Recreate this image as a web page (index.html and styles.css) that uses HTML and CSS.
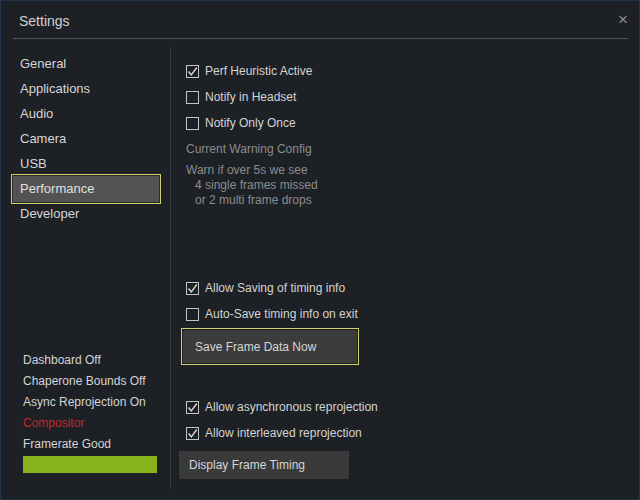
FILE: index.html
```html
<!DOCTYPE html>
<html>
<head>
<meta charset="utf-8">
<link rel="stylesheet" href="styles.css">
</head>
<body>
<div class="window">
  <div class="titlebar">
    <span class="title">Settings</span>
    <span class="close">×</span>
  </div>
  <div class="content">
    <div class="sidebar">
      <div class="nav">
        <div class="nav-item">General</div>
        <div class="nav-item">Applications</div>
        <div class="nav-item">Audio</div>
        <div class="nav-item">Camera</div>
        <div class="nav-item">USB</div>
        <div class="nav-item selected">Performance</div>
        <div class="nav-item">Developer</div>
      </div>
      <div class="status">
        <div class="status-line">Dashboard Off</div>
        <div class="status-line">Chaperone Bounds Off</div>
        <div class="status-line">Async Reprojection On</div>
        <div class="status-line red">Compositor</div>
        <div class="status-line">Framerate Good</div>
        <div class="bar"></div>
      </div>
    </div>
    <div class="divider"></div>
    <div class="panel">
      <div class="check-row"><span class="box checked"><svg viewBox="0 0 13 13"><path d="M2.5 6.5 L5.3 9.8 L10.8 2.5" fill="none" stroke="#d8d8d8" stroke-width="1.4"/></svg></span>Perf Heuristic Active</div>
      <div class="check-row"><span class="box"></span>Notify in Headset</div>
      <div class="check-row"><span class="box"></span>Notify Only Once</div>
      <div class="heading">Current Warning Config</div>
      <div class="warn">
        <div>Warn if over 5s we see</div>
        <div class="indent">4 single frames missed</div>
        <div class="indent">or 2 multi frame drops</div>
      </div>
      <div class="check-row gap-big"><span class="box checked"><svg viewBox="0 0 13 13"><path d="M2.5 6.5 L5.3 9.8 L10.8 2.5" fill="none" stroke="#d8d8d8" stroke-width="1.4"/></svg></span>Allow Saving of timing info</div>
      <div class="check-row"><span class="box"></span>Auto-Save timing info on exit</div>
      <div class="btn btn-save">Save Frame Data Now</div>
      <div class="check-row gap-mid"><span class="box checked"><svg viewBox="0 0 13 13"><path d="M2.5 6.5 L5.3 9.8 L10.8 2.5" fill="none" stroke="#d8d8d8" stroke-width="1.4"/></svg></span>Allow asynchronous reprojection</div>
      <div class="check-row"><span class="box checked"><svg viewBox="0 0 13 13"><path d="M2.5 6.5 L5.3 9.8 L10.8 2.5" fill="none" stroke="#d8d8d8" stroke-width="1.4"/></svg></span>Allow interleaved reprojection</div>
      <div class="btn btn-timing">Display Frame Timing</div>
    </div>
  </div>
</div>
</body>
</html>
```
FILE: styles.css
```css
html, body {
  margin: 0;
  padding: 0;
  background: #1d2025;
}
body {
  width: 640px;
  height: 500px;
  font-family: "Liberation Sans", Arial, sans-serif;
  color: #d4d4d4;
}
.window {
  box-sizing: border-box;
  width: 640px;
  height: 500px;
  border: 1px solid #22344a;
  background: #1d2025;
  display: flex;
  flex-direction: column;
}
.titlebar {
  height: 37px;
  margin: 0 11px 0 12px;
  border-bottom: 1px solid #50535a;
  display: flex;
  align-items: center;
  justify-content: space-between;
  box-sizing: content-box;
}
.title {
  font-size: 14px;
  color: #d2d2d2;
  padding-left: 6px;
  padding-top: 3px;
}
.close {
  font-size: 17px;
  color: #8a8a8a;
  padding-right: 0;
  padding-top: 0;
}
.content {
  flex: 1;
  display: flex;
}
.sidebar {
  width: 169px;
  display: flex;
  flex-direction: column;
  padding-top: 12px;
  box-sizing: border-box;
}
.nav-item {
  height: 25px;
  line-height: 25px;
  font-size: 13px;
  padding-left: 19px;
  color: #d6d6d6;
}
.nav-item.selected {
  height: 28px;
  line-height: 28px;
  margin: -2px 9px -3px 10px;
  padding-left: 8px;
  background: #535353;
  border: 1px solid #cfcf6a;
  box-shadow: inset 0 0 0 1px #2a2a2a;
  color: #e0e0e0;
}
.status {
  margin-top: auto;
  padding-left: 22px;
  padding-bottom: 26px;
}
.status-line {
  height: 21px;
  line-height: 21px;
  font-size: 12px;
  color: #d4d4d4;
}
.status-line.red {
  color: #c1272d;
}
.bar {
  margin-top: 1px;
  width: 134px;
  height: 17px;
  background: #87b41c;
}
.divider {
  width: 1px;
  background: #35383e;
  margin: 8px 0 10px;
}
.panel {
  flex: 1;
  padding-left: 15px;
  padding-top: 19px;
  display: flex;
  flex-direction: column;
  align-items: flex-start;
}
.check-row {
  height: 26px;
  display: flex;
  align-items: center;
  font-size: 12px;
  color: #d4d4d4;
}
.box {
  box-sizing: border-box;
  width: 13px;
  height: 13px;
  border: 1px solid #c4c4c4;
  margin-right: 6px;
  position: relative;
  display: inline-block;
}
.box svg {
  position: absolute;
  left: -1px;
  top: -1px;
  width: 13px;
  height: 13px;
}
.heading {
  margin-top: 2px;
  height: 22px;
  line-height: 22px;
  font-size: 12px;
  color: #8c8c8c;
}
.warn {
  margin-top: 3px;
  font-size: 12px;
  color: #8c8c8c;
}
.warn div {
  height: 15px;
  line-height: 15px;
}
.warn .indent {
  padding-left: 9px;
}
.gap-big {
  margin-top: 67px;
}
.gap-mid {
  margin-top: 29px;
}
.btn {
  box-sizing: border-box;
  font-size: 12px;
  color: #d6d6d6;
  display: flex;
  align-items: center;
}
.btn-save {
  margin-top: 1px;
  margin-left: -5px;
  width: 178px;
  height: 37px;
  padding-left: 13px;
  background: #3c3c3c;
  border: 1px solid #d0d070;
  box-shadow: inset 0 0 0 1px #1e1e1e;
}
.btn-timing {
  margin-top: 5px;
  margin-left: -7px;
  width: 170px;
  height: 28px;
  padding-left: 10px;
  background: #3a3a3a;
}
```
